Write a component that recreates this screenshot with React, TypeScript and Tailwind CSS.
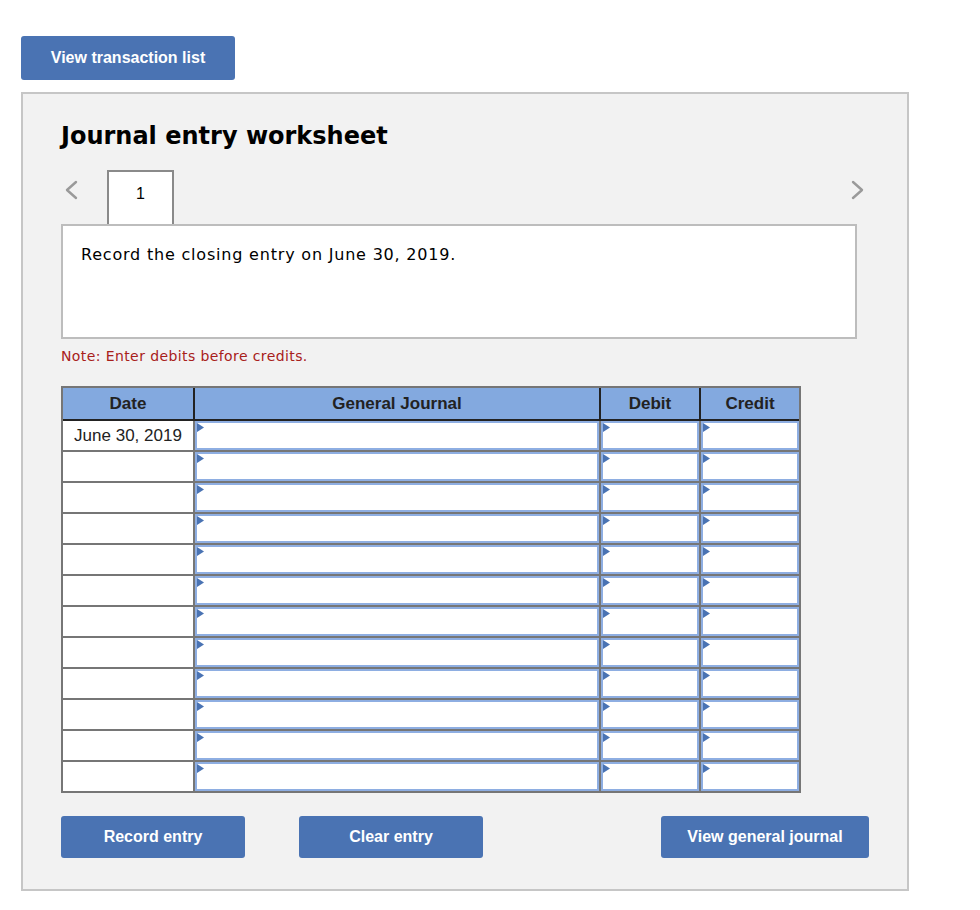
import React from 'react'

const ROWS = 12

function Marker() {
  return (
    <svg className="absolute left-0 top-0" width="7" height="9" viewBox="0 0 7 9">
      <polygon points="0,0 7,4.5 0,9" fill="#4a73b3" />
    </svg>
  )
}

function InputCell() {
  return (
    <div className="relative h-[29px] border-2 border-[#8eaee2] bg-white">
      <Marker />
    </div>
  )
}

function Chevron({ dir }: { dir: 'left' | 'right' }) {
  return (
    <svg width="14" height="20" viewBox="0 0 14 20">
      <polyline
        points={dir === 'left' ? '12,2 3,10 12,18' : '2,2 11,10 2,18'}
        fill="none"
        stroke="#9a9a9a"
        strokeWidth="2.4"
        strokeLinecap="round"
        strokeLinejoin="round"
      />
    </svg>
  )
}

function BlueButton({ label, width }: { label: string; width: string }) {
  return (
    <button
      className={`${width} h-[42px] rounded-[3px] bg-[#4a73b3] text-[16px] font-bold text-white`}
      style={{ fontFamily: '"Liberation Sans", Arial, sans-serif' }}
    >
      {label}
    </button>
  )
}

export default function App() {
  const sans = { fontFamily: '"Liberation Sans", Arial, sans-serif' }
  const verdana = { fontFamily: '"DejaVu Sans", Verdana, sans-serif' }

  return (
    <div className="min-h-[910px] w-[980px] bg-white pl-[21px] pt-[36px]">
      <button
        className="h-[44px] w-[214px] rounded-[3px] bg-[#4a73b3] text-[16px] font-bold text-white"
        style={sans}
      >
        View transaction list
      </button>

      <div className="mt-[12px] h-[799px] w-[888px] border-2 border-[#c6c6c6] bg-[#f2f2f2] px-[38px] pt-[28px]">
        <h1 className="text-[24px] font-bold leading-[28px] text-black" style={verdana}>
          Journal entry worksheet
        </h1>

        <div className="mt-[20px] flex h-[54px] w-[804px] items-start">
          <div className="mt-[10px] ml-[3px]">
            <Chevron dir="left" />
          </div>
          <div
            className="ml-[29px] flex h-[54px] w-[67px] justify-center border-2 border-b-0 border-[#8a8a8a] bg-white pt-[10px] text-[16px] text-black"
            style={sans}
          >
            1
          </div>
          <div className="mt-[10px] ml-auto">
            <Chevron dir="right" />
          </div>
        </div>

        <div
          className="h-[115px] w-[796px] border-2 border-[#bdbdbd] bg-white px-[18px] pt-[17px] text-[16px] leading-[24px] tracking-[0.8px] text-black"
          style={verdana}
        >
          Record the closing entry on June 30, 2019.
        </div>

        <p className="mt-[7px] text-[14px] leading-[20px] tracking-[0.4px] text-[#a8201a]" style={verdana}>
          Note: Enter debits before credits.
        </p>

        <div className="mt-[20px] w-[740px] border-2 border-[#767676] bg-[#767676]" style={sans}>
          <div className="grid grid-cols-[130px_404px_98px_98px] gap-x-[2px] border-b-2 border-r-2 border-[#222] bg-[#222] text-[17px] font-bold text-[#222]">
            {['Date', 'General Journal', 'Debit', 'Credit'].map((h) => (
              <div key={h} className="flex h-[31px] items-center justify-center bg-[#83a9df]">
                {h}
              </div>
            ))}
          </div>
          <div className="grid grid-cols-[130px_404px_98px_98px] gap-[2px]">
            {Array.from({ length: ROWS }).map((_, i) => (
              <React.Fragment key={i}>
                <div className="flex h-[29px] items-center justify-center bg-white text-[17px] text-[#222]">
                  {i === 0 ? 'June 30, 2019' : ''}
                </div>
                <InputCell />
                <InputCell />
                <InputCell />
              </React.Fragment>
            ))}
          </div>
        </div>

        <div className="mt-[23px] flex w-[808px]">
          <BlueButton label="Record entry" width="w-[184px]" />
          <div className="ml-[54px]">
            <BlueButton label="Clear entry" width="w-[184px]" />
          </div>
          <div className="ml-auto">
            <BlueButton label="View general journal" width="w-[208px]" />
          </div>
        </div>
      </div>
    </div>
  )
}
